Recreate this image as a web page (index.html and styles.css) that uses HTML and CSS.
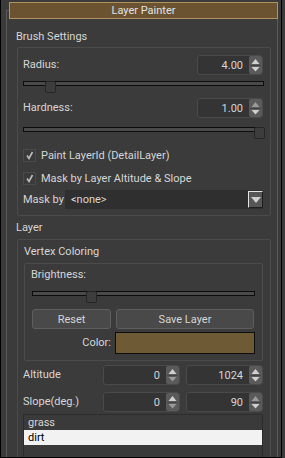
FILE: index.html
```html
<!DOCTYPE html>
<html lang="en">
<head>
  <meta charset="UTF-8" />
  <title>Layer Painter</title>
  <link rel="stylesheet" href="styles.css">
</head>
<body>
  <div class="window">
    <div class="rollout">
      <div class="rollout-title">Layer Painter</div>

      <!-- Brush settings -->
      <div class="section-label">Brush Settings</div>
      <div class="group brush">
        <div class="spin-row first">
          <span class="label">Radius:</span>
          <div class="spinner small">
            <span class="value">4.00</span>
            <span class="arrows">
              <svg width="13" height="18" viewBox="0 0 13 18"><path d="M6.5 3 L10.5 8 L2.5 8 Z" fill="#d0d0d0"/><path d="M1 9.5 H12" stroke="#444" stroke-width="1"/><path d="M2.5 11 L10.5 11 L6.5 15.5 Z" fill="#d0d0d0"/></svg>
            </span>
          </div>
        </div>
        <div class="slider s-radius"><div class="groove"></div><div class="handle" style="left: 9%"></div></div>

        <div class="spin-row hard">
          <span class="label">Hardness:</span>
          <div class="spinner small">
            <span class="value">1.00</span>
            <span class="arrows">
              <svg width="13" height="18" viewBox="0 0 13 18"><path d="M6.5 3 L10.5 8 L2.5 8 Z" fill="#9a9a9a"/><path d="M1 9.5 H12" stroke="#444" stroke-width="1"/><path d="M2.5 11 L10.5 11 L6.5 15.5 Z" fill="#d0d0d0"/></svg>
            </span>
          </div>
        </div>
        <div class="slider s-hard"><div class="groove"></div><div class="handle" style="left: 95.8%"></div></div>

        <div class="check-row c1">
          <span class="checkbox"><svg width="13" height="13" viewBox="0 0 13 13"><path d="M4 6.5 L6 9.5 L9.5 3" fill="none" stroke="#bdbdbd" stroke-width="1.6"/></svg></span>
          <span>Paint LayerId (DetailLayer)</span>
        </div>
        <div class="check-row c2">
          <span class="checkbox"><svg width="13" height="13" viewBox="0 0 13 13"><path d="M4 6.5 L6 9.5 L9.5 3" fill="none" stroke="#bdbdbd" stroke-width="1.6"/></svg></span>
          <span>Mask by Layer Altitude &amp; Slope</span>
        </div>

        <div class="combo-row">
          <span class="label">Mask by</span>
          <div class="combo">
            <span class="combo-text">&lt;none&gt;</span>
            <span class="combo-btn"><svg width="10" height="6" viewBox="0 0 10 6"><path d="M0 0 H10 L5 6 Z" fill="#cfcfcf"/></svg></span>
          </div>
        </div>
      </div>

      <!-- Layer -->
      <div class="section-label layer-label">Layer</div>
      <div class="group vertex">
        <div class="group-title">Vertex Coloring</div>
        <div class="group bright">
          <div class="label">Brightness:</div>
          <div class="slider s-bright"><div class="groove"></div><div class="handle" style="left: 24%"></div></div>
          <div class="btn-row">
            <button class="btn">Reset</button>
            <button class="btn">Save Layer</button>
          </div>
          <div class="color-row">
            <span class="label">Color:</span>
            <span class="swatch"></span>
          </div>
        </div>

        <div class="range-row alt">
          <span class="label">Altitude</span>
          <div class="spinner">
            <span class="value">0</span>
            <span class="arrows">
              <svg width="13" height="18" viewBox="0 0 13 18"><path d="M6.5 3 L10.5 8 L2.5 8 Z" fill="#d0d0d0"/><path d="M1 9.5 H12" stroke="#444" stroke-width="1"/><path d="M2.5 11 L10.5 11 L6.5 15.5 Z" fill="#9a9a9a"/></svg>
            </span>
          </div>
          <div class="spinner">
            <span class="value">1024</span>
            <span class="arrows">
              <svg width="13" height="18" viewBox="0 0 13 18"><path d="M6.5 3 L10.5 8 L2.5 8 Z" fill="#d0d0d0"/><path d="M1 9.5 H12" stroke="#444" stroke-width="1"/><path d="M2.5 11 L10.5 11 L6.5 15.5 Z" fill="#d0d0d0"/></svg>
            </span>
          </div>
        </div>
        <div class="range-row slope">
          <span class="label">Slope(deg.)</span>
          <div class="spinner">
            <span class="value">0</span>
            <span class="arrows">
              <svg width="13" height="18" viewBox="0 0 13 18"><path d="M6.5 3 L10.5 8 L2.5 8 Z" fill="#d0d0d0"/><path d="M1 9.5 H12" stroke="#444" stroke-width="1"/><path d="M2.5 11 L10.5 11 L6.5 15.5 Z" fill="#9a9a9a"/></svg>
            </span>
          </div>
          <div class="spinner">
            <span class="value">90</span>
            <span class="arrows">
              <svg width="13" height="18" viewBox="0 0 13 18"><path d="M6.5 3 L10.5 8 L2.5 8 Z" fill="#9a9a9a"/><path d="M1 9.5 H12" stroke="#444" stroke-width="1"/><path d="M2.5 11 L10.5 11 L6.5 15.5 Z" fill="#d0d0d0"/></svg>
            </span>
          </div>
        </div>

        <ul class="layer-list">
          <li>grass</li>
          <li class="selected">dirt</li>
          <li></li>
        </ul>
      </div>
    </div>
  </div>
</body>
</html>
```

FILE: styles.css
```css
* {
  box-sizing: border-box;
}

body {
  margin: 0;
  background-color: #3b3b3b;
  font-family: Roboto, 'Noto Sans', sans-serif;
  font-size: 11px;
  color: #d6d6d6;
}

.window {
  width: 282px;
  height: 458px;
  border: 1px solid #000;
  border-top: none;
  overflow: hidden;
}

.rollout {
  margin: 10px 3px 0 5px;
  height: 600px;
  border: 1px solid #5a5a5a;
  border-bottom: none;
}

.rollout-title {
  margin: -9px -1px 0 2px;
  height: 17px;
  line-height: 15px;
  border: 1px solid #b0925f;
  background-color: #6b5231;
  text-align: center;
  color: #e2e2e2;
}

.section-label {
  margin: 11px 0 3px 9px;
  line-height: 14px;
}

.layer-label {
  margin-top: 5px;
  margin-bottom: 4px;
}

.group {
  border: 1px solid #4b4b4b;
  border-radius: 2px;
}

.brush {
  margin: 0 6px 0 10px;
  padding: 7px 6px 6px 5px;
}

.label {
  line-height: 14px;
  white-space: nowrap;
}

/* spinner fields */
.spin-row,
.range-row {
  display: flex;
  align-items: center;
  height: 20px;
}

.spin-row {
  justify-content: space-between;
}

.spin-row.hard {
  margin-top: 5px;
}

.spinner {
  display: flex;
  align-items: center;
  height: 20px;
  background-color: #343434;
  border: 1px solid #4a4a4a;
  border-radius: 3px;
  padding-left: 4px;
}

.spinner.small {
  width: 66px;
  margin-right: 1px;
}

.spinner .value {
  flex: 1;
  text-align: right;
  padding-right: 6px;
}

.spinner .arrows {
  display: block;
  width: 13px;
  height: 18px;
  background-color: #5a5a5a;
  border-radius: 2px;
}

.spinner .arrows svg {
  display: block;
}

/* sliders */
.slider {
  position: relative;
  height: 12px;
}

.slider .groove {
  margin-top: 3px;
  height: 5px;
  border: 1px solid #0c0c0c;
  background-color: #4a4a4a;
}

.slider .handle {
  position: absolute;
  top: 0;
  width: 11px;
  height: 12px;
  background-color: #3d3d3d;
  border: 1px solid #262626;
  border-radius: 2px;
}

.s-radius {
  margin-top: 6px;
}

.s-hard {
  margin-top: 9px;
}

.s-bright {
  margin: 9px 7px 0 1px;
}

/* checkboxes */
.check-row {
  display: flex;
  align-items: center;
  gap: 5px;
  height: 17px;
}

.check-row.c1 {
  margin-top: 8px;
}

.check-row.c2 {
  margin-top: 6px;
}

.checkbox {
  display: block;
  width: 13px;
  height: 13px;
  background-color: #3a3a3a;
  border: 1px solid #4a4a4a;
}

.checkbox svg {
  display: block;
  margin: -1px;
}

/* combo box */
.combo-row {
  display: flex;
  align-items: center;
  margin-top: 3px;
  height: 19px;
}

.combo-row .label {
  width: 42px;
}

.combo {
  flex: 1;
  display: flex;
  align-items: center;
  height: 19px;
  margin-right: 1px;
  background-color: #2f2f2f;
  padding-left: 6px;
}

.combo-text {
  flex: 1;
}

.combo-btn {
  display: flex;
  align-items: center;
  justify-content: center;
  width: 15px;
  height: 17px;
  background-color: #565656;
  border: 1px solid #1e1e1e;
  border-left-color: #e4e4e4;
  border-top-color: #e4e4e4;
}

/* layer / vertex coloring */
.vertex {
  margin: 0 6px 0 10px;
  height: 300px;
  padding: 5px 6px 0 5px;
}

.group-title {
  line-height: 14px;
  margin-left: 1px;
}

.bright {
  margin: 4px 1px 0 1px;
  padding: 4px 0 6px 6px;
}

.btn-row {
  display: flex;
  gap: 5px;
  margin: 6px 8px 0 1px;
}

.btn {
  height: 20px;
  padding: 0;
  background-color: #494949;
  border: 1px solid #5e5e5e;
  border-radius: 3px;
  font-family: Roboto, 'Noto Sans', sans-serif;
  font-size: 11px;
  color: #d6d6d6;
}

.btn:first-child {
  width: 79px;
}

.btn:last-child {
  flex: 1;
}

.color-row {
  display: flex;
  align-items: center;
  gap: 4px;
  margin: 3px 7px 0 1px;
}

.color-row .label {
  width: 79px;
  text-align: right;
}

.swatch {
  flex: 1;
  height: 22px;
  background-color: #6e5a34;
  border: 1px solid #0e0e0e;
}

.range-row {
  gap: 6px;
  margin-right: 1px;
}

.range-row .label {
  flex: 1;
}

.range-row .spinner {
  width: 77px;
}

.range-row.alt {
  margin-top: 4px;
}

.range-row.slope {
  margin-top: 7px;
}

.layer-list {
  list-style: none;
  margin: 2px 1px 0 0;
  padding: 0;
  height: 120px;
  background-color: #3a3a3a;
  border: 1px solid #2c2c2c;
}

.layer-list li {
  height: 15px;
  line-height: 15px;
  padding-left: 4px;
}

.layer-list li.selected {
  background-color: #f2f2f2;
  color: #000;
}
```
